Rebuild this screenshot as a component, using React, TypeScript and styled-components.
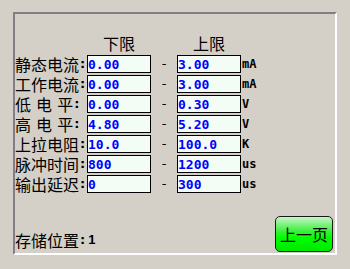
import React from 'react';
import styled, { createGlobalStyle } from 'styled-components';

interface LimitRow {
  label: string;
  low: string;
  high: string;
  unit: string;
}

const rows: LimitRow[] = [
  { label: '静态电流', low: '0.00', high: '3.00', unit: 'mA' },
  { label: '工作电流', low: '0.00', high: '3.00', unit: 'mA' },
  { label: '低 电 平', low: '0.00', high: '0.30', unit: 'V' },
  { label: '高 电 平', low: '4.80', high: '5.20', unit: 'V' },
  { label: '上拉电阻', low: '10.0', high: '100.0', unit: 'K' },
  { label: '脉冲时间', low: '800', high: '1200', unit: 'us' },
  { label: '输出延迟', low: '0', high: '300', unit: 'us' },
];

const GlobalStyle = createGlobalStyle`
  html, body {
    margin: 0;
    padding: 0;
    background: #d4d0c8;
  }
`;

const Screen = styled.div`
  width: 350px;
  height: 269px;
  box-sizing: border-box;
  padding: 12px 13px 14px 13px;
  background: #d4d0c8;
  font-family: "Noto Sans CJK SC", "Noto Sans", sans-serif;
  color: #000;
`;

const Panel = styled.div`
  height: 100%;
  box-sizing: border-box;
  display: flex;
  flex-direction: column;
  padding: 19px 2px 1px 0;
  border-top: 2px solid #808080;
  border-left: 2px solid #808080;
  border-right: 2px solid #ffffff;
  border-bottom: 2px solid #ffffff;
`;

const Grid = styled.div`
  display: grid;
  grid-template-columns: 72px 64px 26px 64px auto;
  align-items: center;
`;

const HeaderRow = styled(Grid)`
  height: 20px;
  margin-bottom: 2px;
`;

const HeaderCell = styled.div`
  font-size: 16px;
  line-height: 20px;
  text-align: center;
`;

const Rows = styled.div`
  display: flex;
  flex-direction: column;
  gap: 2px;
`;

const Row = styled(Grid)`
  height: 18px;
`;

const Label = styled.div`
  display: flex;
  align-items: center;
  font-size: 16px;
  line-height: 18px;
  white-space: pre;
  word-spacing: 1.5px;
`;

const Colon = styled.span`
  font-family: "DejaVu Sans", sans-serif;
  font-weight: bold;
  font-size: 13px;
  margin-left: 1px;
`;

const ValueBox = styled.div`
  height: 18px;
  box-sizing: border-box;
  border: 1px solid #000;
  background: #f4fcf6;
  display: flex;
  align-items: center;
  font-family: "DejaVu Sans Mono", monospace;
  font-weight: bold;
  font-size: 13px;
  color: #0000ff;
`;

const Dash = styled.div`
  text-align: center;
  font-family: "DejaVu Sans", sans-serif;
  font-size: 13px;
  line-height: 18px;
`;

const Unit = styled.div`
  padding-left: 1px;
  font-family: "DejaVu Sans Mono", monospace;
  font-weight: bold;
  font-size: 12px;
  line-height: 18px;
`;

const Footer = styled.div`
  margin-top: auto;
  display: flex;
  align-items: flex-end;
  justify-content: space-between;
`;

const Storage = styled.div`
  display: flex;
  align-items: center;
  font-size: 16px;
  line-height: 20px;
  margin-bottom: 2px;
`;

const StorageValue = styled.span`
  font-family: "Liberation Sans", sans-serif;
  font-weight: bold;
  font-size: 13px;
  margin-left: 3px;
`;

const PageButton = styled.button`
  width: 58px;
  height: 36px;
  box-sizing: border-box;
  border: 1px solid #1a1a1a;
  border-radius: 5px;
  background: linear-gradient(#c8f4c8 0%, #40f040 40%, #00ff00 60%, #00e800 100%);
  font-family: "Noto Sans CJK SC", sans-serif;
  font-size: 16px;
  color: #000;
  padding: 0;
  margin: 0;
  cursor: pointer;
`;

const App: React.FC = () => {
  return (
    <>
      <GlobalStyle />
      <Screen>
        <Panel>
          <HeaderRow>
            <div />
            <HeaderCell>下限</HeaderCell>
            <div />
            <HeaderCell>上限</HeaderCell>
            <div />
          </HeaderRow>
          <Rows>
            {rows.map(row => (
              <Row key={row.label}>
                <Label>
                  {row.label}
                  <Colon>:</Colon>
                </Label>
                <ValueBox>{row.low}</ValueBox>
                <Dash>-</Dash>
                <ValueBox>{row.high}</ValueBox>
                <Unit>{row.unit}</Unit>
              </Row>
            ))}
          </Rows>
          <Footer>
            <Storage>
              存储位置
              <Colon>:</Colon>
              <StorageValue>1</StorageValue>
            </Storage>
            <PageButton>上一页</PageButton>
          </Footer>
        </Panel>
      </Screen>
    </>
  );
};

export default App;
